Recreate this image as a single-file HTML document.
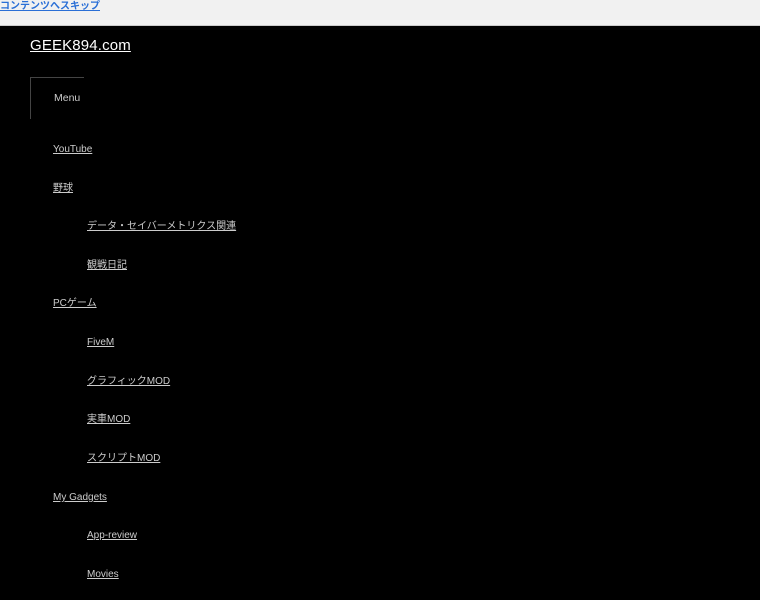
<!DOCTYPE html>
<html><head><meta charset="utf-8"><style>
html,body{margin:0;padding:0;background:#000;width:760px;height:600px;overflow:hidden;font-family:"Liberation Sans","Noto Sans CJK JP",sans-serif}
.top{position:absolute;left:0;top:0;width:760px;height:25px;background:#f1f1f1;border-bottom:1px solid #ccc}
.top a{position:absolute;left:0;top:1px;font-size:10px;font-weight:bold;color:#2a6fd6;text-decoration:underline;line-height:12px}
.title{position:absolute;left:30px;top:37px;font-size:15px;color:#fff;text-decoration:underline;letter-spacing:0.15px;line-height:18px}
.menu{position:absolute;left:30px;top:77px;width:53px;height:41px;border-top:1px solid #444;border-left:1px solid #444}
.menu span{position:absolute;left:23px;top:14px;font-size:10.5px;color:#ccc}
.i{position:absolute;font-size:10px;color:#ccc;text-decoration:underline;line-height:13px;white-space:nowrap}
</style></head><body>
<div class="top"><a>コンテンツへスキップ</a></div>
<div class="title">GEEK894.com</div>
<div class="menu"><span>Menu</span></div>
<div class="i" style="left:53px;top:143px">YouTube</div>
<div class="i" style="left:53px;top:182px">野球</div>
<div class="i" style="left:87px;top:220px">データ・セイバーメトリクス関連</div>
<div class="i" style="left:87px;top:259px">観戦日記</div>
<div class="i" style="left:53px;top:297px">PCゲーム</div>
<div class="i" style="left:87px;top:336px">FiveM</div>
<div class="i" style="left:87px;top:375px">グラフィックMOD</div>
<div class="i" style="left:87px;top:413px">実車MOD</div>
<div class="i" style="left:87px;top:452px">スクリプトMOD</div>
<div class="i" style="left:53px;top:491px">My Gadgets</div>
<div class="i" style="left:87px;top:529px">App-review</div>
<div class="i" style="left:87px;top:568px">Movies</div>
</body></html>
